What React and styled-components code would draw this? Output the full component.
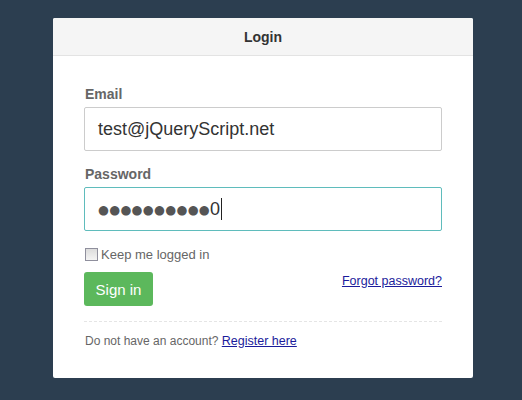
import React from "react";
import styled, { createGlobalStyle } from "styled-components";

const Global = createGlobalStyle`
  html, body {
    margin: 0;
    padding: 0;
    background: #2c3e50;
    font-family: "Liberation Sans", Arial, sans-serif;
  }
`;

const Page = styled.div`
  width: 522px;
  height: 400px;
  padding: 18px 0 0 53px;
  box-sizing: border-box;
  display: flex;
`;

const Card = styled.div`
  width: 420px;
  height: 360px;
  background: #fff;
  border-radius: 2px;
  box-sizing: border-box;
  display: flex;
  flex-direction: column;
`;

const Header = styled.div`
  height: 37px;
  background: #f5f5f5;
  border-bottom: 1px solid #e3e3e3;
  border-radius: 2px 2px 0 0;
  display: flex;
  align-items: center;
  justify-content: center;
  font-size: 14px;
  font-weight: bold;
  color: #333;
`;

const Body = styled.div`
  padding: 28px 31px 0 31px;
  display: flex;
  flex-direction: column;
`;

const Label = styled.div`
  font-size: 14px;
  line-height: 20px;
  font-weight: bold;
  color: #666;
  margin-top: ${(p) => p.$top || 0}px;
  margin-bottom: 3px;
  padding-left: 1px;
`;

const Field = styled.div`
  height: 44px;
  box-sizing: border-box;
  border: 1px solid ${(p) => (p.$focus ? "#5fbcbc" : "#ccc")};
  border-radius: 2px;
  padding-left: 13px;
  display: flex;
  align-items: center;
  font-size: 18px;
  color: #333;
`;

const Dots = styled.span`
  font-family: "DejaVu Sans", sans-serif;
  font-size: 12.5px;
  letter-spacing: 0.3px;
  color: #555;
`;

const Caret = styled.span`
  display: inline-block;
  width: 1px;
  height: 22px;
  background: #222;
  margin-left: 1px;
`;

const CheckRow = styled.label`
  margin-top: 14px;
  height: 18px;
  display: flex;
  align-items: center;
  gap: 3px;
  font-size: 13px;
  color: #666;
`;

const Box = styled.span`
  width: 11px;
  height: 11px;
  border: 1px solid #8f8f9d;
  background: linear-gradient(#dcdcdc, #f4f4f4);
  margin-left: 1px;
`;

const ActionRow = styled.div`
  margin-top: 9px;
  display: flex;
  justify-content: space-between;
  align-items: flex-start;
`;

const Button = styled.button`
  height: 34px;
  width: 69px;
  padding: 0;
  border: none;
  border-radius: 3px;
  background: #5cb85c;
  color: #fff;
  font-family: "Liberation Sans", Arial, sans-serif;
  font-size: 15px;
  margin-left: 0;
`;

const Link = styled.a`
  color: #1b1b9b;
  font-size: 12.5px;
  text-decoration: underline;
  margin-top: ${(p) => p.$top || 0}px;
`;

const Divider = styled.div`
  margin-top: 15px;
  border-top: 1px dashed #e5e5e5;
`;

const Footer = styled.div`
  margin-top: 11px;
  font-size: 12px;
  line-height: 16px;
  color: #666;
  padding-left: 1px;
`;

export default function App() {
  return (
    <>
      <Global />
      <Page>
        <Card>
          <Header>Login</Header>
          <Body>
            <Label>Email</Label>
            <Field>test@jQueryScript.net</Field>
            <Label $top={13}>Password</Label>
            <Field $focus>
              <Dots>●●●●●●●●●●</Dots>0<Caret />
            </Field>
            <CheckRow>
              <Box />
              Keep me logged in
            </CheckRow>
            <ActionRow>
              <Button>Sign in</Button>
              <Link href="#" $top={2}>Forgot password?</Link>
            </ActionRow>
            <Divider />
            <Footer>
              Do not have an account? <Link href="#">Register here</Link>
            </Footer>
          </Body>
        </Card>
      </Page>
    </>
  );
}
